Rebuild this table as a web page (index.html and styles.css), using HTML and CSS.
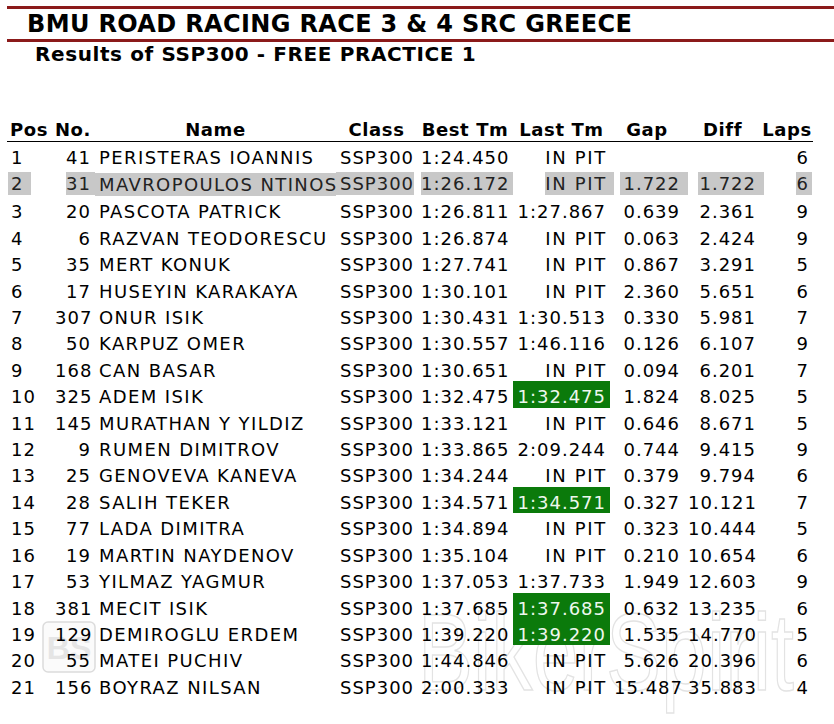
FILE: index.html
```html
<!DOCTYPE html>
<html>
<head>
<meta charset="utf-8">
<title>BMU Road Racing - Results</title>
<link rel="stylesheet" href="styles.css">
</head>
<body>
<div class="page">
  <div class="watermark-logo">
    <svg width="54" height="52" viewBox="0 0 54 52">
      <rect x="1" y="1" width="52" height="50" rx="5" ry="5" fill="#fbfbfb" stroke="#dcdcdc" stroke-width="1.5"/>
      <text x="27" y="38" text-anchor="middle" font-family="Liberation Sans, Arial, sans-serif" font-weight="bold" font-size="32" fill="#e5e5e5">BS</text>
    </svg>
  </div>
  <div class="watermark-text">
    <svg width="400" height="134" viewBox="0 0 400 134">
      <text x="2" y="100" font-family="Liberation Sans, Arial, sans-serif" font-size="110" textLength="376" lengthAdjust="spacingAndGlyphs" fill="none" stroke="#e3e3e3" stroke-width="1.5">BikerSpirit</text>
    </svg>
  </div>

  <header class="head">
    <h1 class="title">BMU ROAD RACING RACE 3 &amp; 4 SRC GREECE</h1>
    <h2 class="subtitle">Results of SSP300 - FREE PRACTICE 1</h2>
  </header>

  <table class="results">
    <colgroup>
      <col class="c-pos"><col class="c-no"><col class="c-name"><col class="c-class"><col class="c-best"><col class="c-last"><col class="c-gap"><col class="c-diff"><col class="c-laps">
    </colgroup>
    <thead>
      <tr>
        <th>Pos</th><th>No.</th><th>Name</th><th>Class</th><th>Best Tm</th><th>Last Tm</th><th>Gap</th><th>Diff</th><th>Laps</th>
      </tr>
    </thead>
    <tbody>
      <tr><td class="pos">1</td><td class="no">41</td><td class="name">PERISTERAS IOANNIS</td><td class="cls">SSP300</td><td class="best">1:24.450</td><td class="last"><span class="pit">IN PIT</span></td><td class="gap"></td><td class="diff"></td><td class="laps">6</td></tr>
      <tr class="selected"><td class="pos"><span class="sel s-pos">2</span></td><td class="no"><span class="sel s-no">31</span></td><td class="name"><span class="sel s-name">MAVROPOULOS NTINOS</span></td><td class="cls"><span class="sel s-cls">SSP300</span></td><td class="best"><span class="sel s-best">1:26.172</span></td><td class="last"><span class="sel s-last pit">IN PIT</span></td><td class="gap"><span class="sel s-gap">1.722</span></td><td class="diff"><span class="sel s-diff">1.722</span></td><td class="laps"><span class="sel s-laps">6</span></td></tr>
      <tr><td class="pos">3</td><td class="no">20</td><td class="name">PASCOTA PATRICK</td><td class="cls">SSP300</td><td class="best">1:26.811</td><td class="last">1:27.867</td><td class="gap">0.639</td><td class="diff">2.361</td><td class="laps">9</td></tr>
      <tr><td class="pos">4</td><td class="no">6</td><td class="name">RAZVAN TEODORESCU</td><td class="cls">SSP300</td><td class="best">1:26.874</td><td class="last"><span class="pit">IN PIT</span></td><td class="gap">0.063</td><td class="diff">2.424</td><td class="laps">9</td></tr>
      <tr><td class="pos">5</td><td class="no">35</td><td class="name">MERT KONUK</td><td class="cls">SSP300</td><td class="best">1:27.741</td><td class="last"><span class="pit">IN PIT</span></td><td class="gap">0.867</td><td class="diff">3.291</td><td class="laps">5</td></tr>
      <tr><td class="pos">6</td><td class="no">17</td><td class="name">HUSEYIN KARAKAYA</td><td class="cls">SSP300</td><td class="best">1:30.101</td><td class="last"><span class="pit">IN PIT</span></td><td class="gap">2.360</td><td class="diff">5.651</td><td class="laps">6</td></tr>
      <tr><td class="pos">7</td><td class="no">307</td><td class="name">ONUR ISIK</td><td class="cls">SSP300</td><td class="best">1:30.431</td><td class="last">1:30.513</td><td class="gap">0.330</td><td class="diff">5.981</td><td class="laps">7</td></tr>
      <tr><td class="pos">8</td><td class="no">50</td><td class="name">KARPUZ OMER</td><td class="cls">SSP300</td><td class="best">1:30.557</td><td class="last">1:46.116</td><td class="gap">0.126</td><td class="diff">6.107</td><td class="laps">9</td></tr>
      <tr><td class="pos">9</td><td class="no">168</td><td class="name">CAN BASAR</td><td class="cls">SSP300</td><td class="best">1:30.651</td><td class="last"><span class="pit">IN PIT</span></td><td class="gap">0.094</td><td class="diff">6.201</td><td class="laps">7</td></tr>
      <tr><td class="pos">10</td><td class="no">325</td><td class="name">ADEM ISIK</td><td class="cls">SSP300</td><td class="best">1:32.475</td><td class="last personal">1:32.475</td><td class="gap">1.824</td><td class="diff">8.025</td><td class="laps">5</td></tr>
      <tr><td class="pos">11</td><td class="no">145</td><td class="name">MURATHAN Y YILDIZ</td><td class="cls">SSP300</td><td class="best">1:33.121</td><td class="last"><span class="pit">IN PIT</span></td><td class="gap">0.646</td><td class="diff">8.671</td><td class="laps">5</td></tr>
      <tr><td class="pos">12</td><td class="no">9</td><td class="name">RUMEN DIMITROV</td><td class="cls">SSP300</td><td class="best">1:33.865</td><td class="last">2:09.244</td><td class="gap">0.744</td><td class="diff">9.415</td><td class="laps">9</td></tr>
      <tr><td class="pos">13</td><td class="no">25</td><td class="name">GENOVEVA KANEVA</td><td class="cls">SSP300</td><td class="best">1:34.244</td><td class="last"><span class="pit">IN PIT</span></td><td class="gap">0.379</td><td class="diff">9.794</td><td class="laps">6</td></tr>
      <tr><td class="pos">14</td><td class="no">28</td><td class="name">SALIH TEKER</td><td class="cls">SSP300</td><td class="best">1:34.571</td><td class="last personal">1:34.571</td><td class="gap">0.327</td><td class="diff">10.121</td><td class="laps">7</td></tr>
      <tr><td class="pos">15</td><td class="no">77</td><td class="name">LADA DIMITRA</td><td class="cls">SSP300</td><td class="best">1:34.894</td><td class="last"><span class="pit">IN PIT</span></td><td class="gap">0.323</td><td class="diff">10.444</td><td class="laps">5</td></tr>
      <tr><td class="pos">16</td><td class="no">19</td><td class="name">MARTIN NAYDENOV</td><td class="cls">SSP300</td><td class="best">1:35.104</td><td class="last"><span class="pit">IN PIT</span></td><td class="gap">0.210</td><td class="diff">10.654</td><td class="laps">6</td></tr>
      <tr><td class="pos">17</td><td class="no">53</td><td class="name">YILMAZ YAGMUR</td><td class="cls">SSP300</td><td class="best">1:37.053</td><td class="last">1:37.733</td><td class="gap">1.949</td><td class="diff">12.603</td><td class="laps">9</td></tr>
      <tr><td class="pos">18</td><td class="no">381</td><td class="name">MECIT ISIK</td><td class="cls">SSP300</td><td class="best">1:37.685</td><td class="last personal">1:37.685</td><td class="gap">0.632</td><td class="diff">13.235</td><td class="laps">6</td></tr>
      <tr><td class="pos">19</td><td class="no">129</td><td class="name">DEMIROGLU ERDEM</td><td class="cls">SSP300</td><td class="best">1:39.220</td><td class="last personal">1:39.220</td><td class="gap">1.535</td><td class="diff">14.770</td><td class="laps">5</td></tr>
      <tr><td class="pos">20</td><td class="no">55</td><td class="name">MATEI PUCHIV</td><td class="cls">SSP300</td><td class="best">1:44.846</td><td class="last"><span class="pit">IN PIT</span></td><td class="gap">5.626</td><td class="diff">20.396</td><td class="laps">6</td></tr>
      <tr><td class="pos">21</td><td class="no">156</td><td class="name">BOYRAZ NILSAN</td><td class="cls">SSP300</td><td class="best">2:00.333</td><td class="last"><span class="pit">IN PIT</span></td><td class="gap">15.487</td><td class="diff">35.883</td><td class="laps">4</td></tr>
    </tbody>
  </table>
</div>
</body>
</html>
```

FILE: styles.css
```css
html, body {
  margin: 0;
  padding: 0;
  background: #ffffff;
}

body {
  font-family: "DejaVu Sans", Verdana, sans-serif;
  color: #000000;
  width: 834px;
  height: 724px;
  overflow: hidden;
}

.page {
  position: relative;
  padding-top: 6px;
}

/* ---------- heading ---------- */
.head {
  margin: 0;
}

.title {
  margin: 0 0 0 7px;
  padding: 0 0 0 20px;
  border-top: 3px solid #8b1a1a;
  border-bottom: 3px solid #8b1a1a;
  font-size: 24px;
  font-weight: bold;
  letter-spacing: 0.35px;
  line-height: 30px;
  height: 30px;
}

.subtitle {
  margin: 0;
  padding: 0 0 0 35px;
  font-size: 20px;
  font-weight: bold;
  letter-spacing: 0.6px;
  line-height: 24px;
}

/* ---------- table ---------- */
.results {
  position: relative;
  z-index: 1;
  margin: 49px 0 0 7px;
  width: 806px;
  table-layout: fixed;
  border-collapse: separate;
  border-spacing: 0;
  font-size: 18px;
  letter-spacing: 1px;
}

.c-pos { width: 44px; }
.c-no { width: 44px; }
.c-name { width: 241px; }
.c-class { width: 81px; }
.c-best { width: 96px; }
.c-last { width: 97px; }
.c-gap { width: 74px; }
.c-diff { width: 77px; }
.c-laps { width: 52px; }

.results th {
  height: 26px;
  padding: 0;
  font-weight: bold;
  letter-spacing: 0.6px;
  text-align: center;
  vertical-align: bottom;
  line-height: 22px;
  white-space: nowrap;
  border-bottom: 1px solid #000;
}

.results tbody tr {
  height: 26.42px;
}

.results td {
  padding: 5px 4px 0 4px;
  line-height: 21px;
  vertical-align: top;
  white-space: nowrap;
}

.results td.pos { text-align: left; }
.results td.no { text-align: right; }
.results td.name { text-align: left; letter-spacing: 1.4px; }
.results td.cls { text-align: left; }
.results td.best { text-align: left; }
.results td.last { text-align: right; }
.results td.gap { text-align: right; }
.results td.diff { text-align: right; padding-right: 5px; }
.results td.laps { text-align: right; }

.pit {
  letter-spacing: 1.7px;
  margin-right: -1px;
}

.results td.personal {
  background: #0b7a0b;
  color: #eef8ee;
}

/* selected (highlighted) row */
.selected td {
  color: #222;
}

.sel {
  background: #c8c8c8;
  padding-top: 1px;
  padding-bottom: 1px;
}

.s-pos { margin-left: -3px; padding-left: 3px; padding-right: 8px; }
.s-no { margin-right: -4px; padding-right: 4px; }
.s-name { display: block; margin: 0 -4px; padding: 1px 4px; }
.s-cls { margin-left: -4px; padding-left: 4px; }
.s-best { padding-right: 3px; }
.s-last.pit { margin-right: -8px; padding-right: 7px; }
.s-gap { padding-left: 3px; margin-right: -8px; padding-right: 8px; }
.s-diff { padding-left: 1px; margin-right: -8px; padding-right: 8px; }
.s-laps { padding-left: 1px; margin-right: -3px; padding-right: 3px; }

/* ---------- watermark ---------- */
.watermark-logo {
  position: absolute;
  left: 42px;
  top: 621px;
  z-index: 0;
}

.watermark-logo svg,
.watermark-text svg {
  display: block;
}

.watermark-text {
  position: absolute;
  left: 416px;
  top: 590px;
  z-index: 0;
}
```
